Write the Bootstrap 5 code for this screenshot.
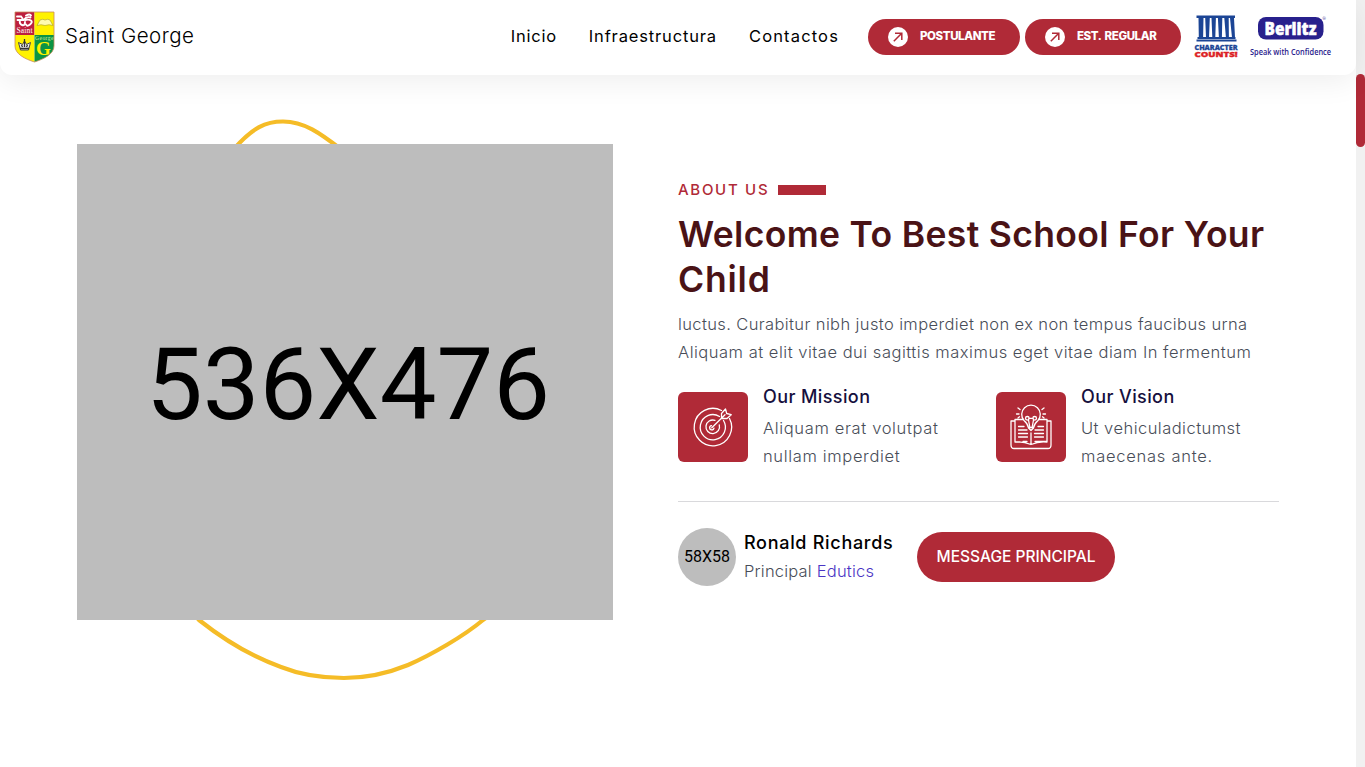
<!DOCTYPE html>
<html lang="es">
<head>
<meta charset="utf-8">
<meta name="viewport" content="width=device-width, initial-scale=1">
<title>Saint George</title>
<link href="https://cdn.jsdelivr.net/npm/bootstrap@5.3.0/dist/css/bootstrap.min.css" rel="stylesheet">
<style>
:root{--brand:#b02a37}
html,body{height:100%;overflow:hidden}
body{font-family:Inter,"Open Sans",sans-serif;color:#000;background:#fff;font-size:16px}
svg{display:block;flex:none;overflow:visible}
.topbar{height:75px;background:#fff;border-radius:0 0 12px 12px;box-shadow:0 6px 30px rgba(0,0,0,.07);padding:0 24px 2px 14px}
.brand-name{font-size:20.5px;font-weight:300;letter-spacing:.5px;margin-left:10px;color:#000}
.menu{gap:32px;margin-right:29px;font-size:16.5px}
.menu a{color:#000;text-decoration:none;letter-spacing:.84px}
.menu a:first-child{letter-spacing:.75px}
.menu a:last-child{letter-spacing:1.15px}
.pill{height:36px;border-radius:18px;background:var(--brand);color:#fff;font-size:11.5px;font-weight:800;padding-left:20px;gap:12px;text-decoration:none;white-space:nowrap;letter-spacing:-.4px;word-spacing:1.5px}
.pill-a{width:152px;margin-right:5px}
.pill-b{width:156px;margin-right:13px}
.about{padding:69px 0 0 77px;gap:65px}
.photo{width:536px;height:476px;background:#bdbdbd;font-family:Roboto,sans-serif;font-size:101px;line-height:1;padding:5px 0 0 6px}
.blob{left:1px;top:-44px}
.copy{width:601px;padding-top:31px}
.eyebrow{font-size:15px;font-weight:500;color:var(--brand);line-height:30px;letter-spacing:1.7px;gap:9px}
.eyebar{width:48px;height:10px;background:var(--brand)}
.headline{font-size:35.5px;font-weight:600;line-height:45px;color:#4a1316;letter-spacing:.33px;margin:7px 0 8px;white-space:nowrap}
.headline .last-line{letter-spacing:.8px}
.soft{color:#484d58;font-size:16.5px;font-weight:300;line-height:28px;white-space:nowrap}
.intro{letter-spacing:.38px}
.intro .wide{letter-spacing:.515px}
.features{margin-top:18px}
.feature{width:318px;gap:15px}
.tile{width:70px;height:70px;border-radius:6px;background:var(--brand);margin-top:8px}
.sub{font-size:18px;font-weight:500;line-height:26px;letter-spacing:.4px;margin:0;white-space:nowrap;color:#160f3d}
.feature .soft{margin-top:4px;letter-spacing:.65px}
.feature .tight{letter-spacing:.47px}
.tight .last-line{letter-spacing:.75px}
.rule{border-top:1px solid #d9d9dc;margin:31px 0 26px}
.avatar{width:58px;height:58px;background:#bdbdbd;font-family:Roboto,sans-serif}
.person{width:173px;margin-left:8px}
.person .sub{color:#000;letter-spacing:.7px;line-height:28px}
.person .soft{letter-spacing:.2px;line-height:29px}
.person a{color:#4a35c4;text-decoration:none}
.msg{width:198px;height:50px;border-radius:25px;background:var(--brand);color:#fff;font-size:15.5px;font-weight:500;border:0;white-space:nowrap}
.track{width:9px;background:#f1f1f1;padding-top:74px}
.thumb{height:73px;border-radius:5px;background:var(--brand)}
</style>
</head>
<body class="d-flex">
<div class="flex-grow-1">
  <header class="topbar d-flex align-items-center position-relative">
    <svg width="41" height="52" viewBox="0 0 41 52">
      <defs><clipPath id="shield"><path d="M1 1H40V35C40 43 30 48 20.500 51C11 48 1 43 1 35Z"/></clipPath></defs>
      <g clip-path="url(#shield)">
        <rect width="20.500" height="24" fill="#bd1f3e"/><rect x="20.500" width="21" height="24" fill="#fff200"/>
        <rect y="24" width="20.500" height="28" fill="#fff200"/><rect x="20.500" y="24" width="21" height="28" fill="#0b9444"/>
        <path d="M3 5.500h4l1.500 2M3.500 9h6q3-4 7-2.500M12 4.500q4-2 5 0M6 9q-1 4 2 5t3-3M11 9q4-1 6 .5t-1 4-4 0" fill="none" stroke="#fff" stroke-width="1.900" stroke-linecap="round"/>
        <path d="M23 14.500l3-5.500q3-1.500 5 0q3-1.500 5 0l3 5.500q-4-1.500-8 0q-4-1.500-8 0z" fill="#fffbb0" stroke="#b5a92a" stroke-width=".7"/>
        <path d="M6.500 39L4.500 31.500l4 2 2-3.500 2 3.500 4-2-2 7.500z" fill="#eee" stroke="#444" stroke-width="1"/><path d="M6 37.500h9M10.500 28v8M7.500 34l1 2M13.500 34l-1 2" stroke="#333" stroke-width="1.300"/>
        <text x="2.500" y="22" font-family="Liberation Serif" font-size="7.500" fill="#fff" textLength="16">Saint</text>
        <text x="21" y="29" font-family="Liberation Serif" font-size="5.500" fill="#d8f0a0" textLength="18.500">George</text>
        <text x="22" y="44" font-family="Liberation Serif" font-weight="bold" font-size="19" fill="#fff200">G</text>
      </g>
      <path d="M1 1H40V35C40 43 30 48 20.500 51C11 48 1 43 1 35Z" fill="none" stroke="#c98b5a" stroke-width=".8"/>
    </svg>
    <span class="brand-name">Saint George</span>
    <nav class="menu d-flex ms-auto"><a href="#">Inicio</a><a href="#">Infraestructura</a><a href="#">Contactos</a></nav>
    <a href="#" class="pill pill-a d-flex align-items-center"><svg width="20" height="20" viewBox="0 0 20 20"><circle cx="10" cy="10" r="10" fill="#fff"/><path d="M5.800 14.200L13.500 6.500M7 6.200H13.800V13" fill="none" stroke="#b02a37" stroke-width="1.500"/></svg>POSTULANTE</a>
    <a href="#" class="pill pill-b d-flex align-items-center"><svg width="20" height="20" viewBox="0 0 20 20"><circle cx="10" cy="10" r="10" fill="#fff"/><path d="M5.800 14.200L13.500 6.500M7 6.200H13.800V13" fill="none" stroke="#b02a37" stroke-width="1.500"/></svg>EST. REGULAR</a>
    <svg width="46" height="46" viewBox="0 0 46 46">
      <path d="M2.500 1.500H41V4H2.500zM4.500 4h5l-.4 19.500H4.800zM11.200 4h4.600l-.8 19.500h-3zM17.500 4h4.400l-.6 19.500h-3zM23.900 4h4.400l-.4 19.500h-3zM30.300 4h4.400l.2 19.500h-3zM36 4h4l1 19.500h-3zM3.500 23H41.500V25H3.500zM2.500 25.500H42.500V27.500H2.500z" fill="#1c4595"/>
      <text x=".5" y="35.500" font-family="Open Sans" font-weight="800" font-size="7.600" fill="#1c4595" stroke="#1c4595" stroke-width=".3" textLength="43" lengthAdjust="spacingAndGlyphs">CHARACTER</text>
      <text x=".5" y="42.700" font-family="Open Sans" font-weight="800" font-size="7.600" fill="#dc1f26" stroke="#dc1f26" stroke-width=".4" textLength="43" lengthAdjust="spacingAndGlyphs">COUNTS!</text>
    </svg>
    <svg class="ms-2" width="84" height="46" viewBox="0 0 84 46">
      <rect x="10" y="3" width="65.500" height="22.500" rx="8" fill="#28208c"/>
      <text x="16.500" y="20.500" font-family="Open Sans" font-weight="800" font-size="18" fill="#fff" stroke="#fff" stroke-width=".5" textLength="52" lengthAdjust="spacingAndGlyphs">Berlitz</text>
      <text x="74.500" y="5.500" font-family="Open Sans" font-size="4" fill="#28208c">®</text>
      <text x="2" y="41" font-family="Open Sans" font-weight="600" font-size="8.500" fill="#28208c" textLength="81" lengthAdjust="spacingAndGlyphs">Speak with Confidence</text>
    </svg>
  </header>
  <main class="about d-flex align-items-start">
    <div class="position-relative">
      <svg class="blob position-absolute" width="536" height="600" viewBox="0 0 536 600" fill="none"><path d="M155 50C175 27 188 21.500 205 21.500C226 21.500 242 33 264 50C500 180 500 460 405 520C386 536 353 555 330 565C308 574 288 578 266 578C240 578 218 573 203 567C175 557 145 539 121 520C40 440 100 110 155 50Z" stroke="#f5bc27" stroke-width="4.200"/></svg>
      <div class="photo position-relative d-flex align-items-center justify-content-center">536X476</div>
    </div>
    <section class="copy">
      <div class="eyebrow d-flex align-items-center">ABOUT US<span class="eyebar"></span></div>
      <h1 class="headline">Welcome To Best School For Your<br><span class="last-line">Child</span></h1>
      <p class="soft intro mb-0">luctus. Curabitur nibh justo imperdiet non ex non tempus faucibus urna<br><span class="wide">Aliquam at elit vitae dui sagittis maximus eget vitae diam In fermentum</span></p>
      <div class="features d-flex">
        <div class="feature d-flex flex-shrink-0">
          <div class="tile d-flex align-items-center justify-content-center">
            <svg width="40" height="40" viewBox="0 0 40 40" fill="none" stroke="#fff" stroke-width="1.300" stroke-linejoin="round" stroke-linecap="round"><path d="M28.500 3.500A18.700 18.700 0 1 0 36.500 11.500M26.500 9.500A12.600 12.600 0 1 0 30.500 13.500M22 13.400A6.800 6.800 0 1 0 26.300 18"/><path d="M18.500 18.600a2.200 2.200 0 1 0 2.500 2.500M18.800 20.800L32 7.800M28.500 11.500V6.500L32.500 2l1.200 4.500 4.500 1.200L34 11.500H28.500"/></svg>
          </div>
          <div><h2 class="sub">Our Mission</h2><p class="soft mb-0">Aliquam erat volutpat<br>nullam imperdiet</p></div>
        </div>
        <div class="feature d-flex flex-shrink-0">
          <div class="tile d-flex align-items-center justify-content-center">
            <svg width="42" height="46" viewBox="0 0 42 46" fill="none" stroke="#fff" stroke-width="1.300" stroke-linejoin="round" stroke-linecap="round"><path d="M18.500 24q-.5-4-4.500-7.500A9.300 9.300 0 1 1 28 16.500Q24 20 23.500 24L21 26.500zM18.500 23.500h5M19.800 23L18.500 16M22.200 23L23.500 16"/><circle cx="17.300" cy="14.300" r="1.800"/><circle cx="24.700" cy="14.300" r="1.800"/><path d="M19 14.300h4M8 4l2 1.600M6.500 10H9M8 14l1.500-1.200M34 4l-2 1.600M35.500 10H33M34 14l-1.500-1.200"/><path d="M13 15.500H5V38q8-1 16 2.500Q29 37 37 38V15.500H29M5 17H1V41q0 3.500 3 3.500H38q3 0 3-3.500V17H37M21 29V40M5 38H10M13 37.500H17M25 37.500H37M8.500 22.500H14M8.500 26H17M8.500 29.500H17.500M8.500 33H17.500M28 22.500h5.500M25 26h8.500M24.500 29.500h9M24.500 33h9"/></svg>
          </div>
          <div><h2 class="sub">Our Vision</h2><p class="soft tight mb-0">Ut vehiculadictumst<br><span class="last-line">maecenas ante.</span></p></div>
        </div>
      </div>
      <div class="rule"></div>
      <div class="d-flex align-items-center">
        <div class="avatar rounded-circle d-flex align-items-center justify-content-center">58X58</div>
        <div class="person"><h3 class="sub">Ronald Richards</h3><p class="soft mb-0">Principal <a href="#">Edutics</a></p></div>
        <button class="msg p-0" type="button">MESSAGE PRINCIPAL</button>
      </div>
    </section>
  </main>
</div>
<div class="track"><div class="thumb"></div></div>
</body>
</html>
